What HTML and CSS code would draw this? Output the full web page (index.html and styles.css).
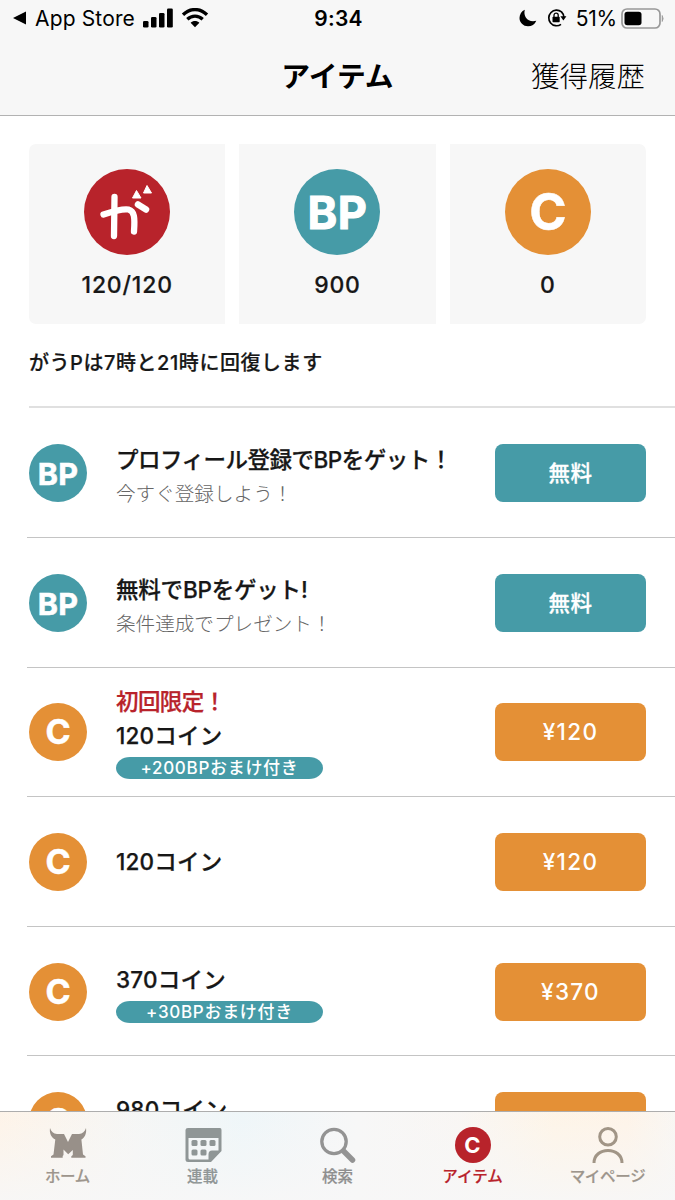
FILE: index.html
```html
<!DOCTYPE html>
<html lang="ja">
<head>
<meta charset="utf-8">
<title>アイテム</title>
<link rel="stylesheet" href="styles.css">
</head>
<body>
<div class="phone">
  <header class="top">
    <div class="status">
      <div class="status-left">
        <svg width="15" height="14" viewBox="0 0 15 14"><path d="M1 7 14 .5v13z"/></svg>
        <span class="back">App Store</span>
        <svg class="signal" width="31" height="20" viewBox="0 0 31 20"><rect x="0" y="13" width="5.5" height="6.5" rx="1.3"/><rect x="8" y="9" width="5.5" height="10.5" rx="1.3"/><rect x="16" y="5" width="5.5" height="14.500" rx="1.3"/><rect x="24" y="0.500" width="5.800" height="19" rx="1.3"/></svg>
        <svg class="wifi" width="28" height="20" viewBox="0 0 28 20"><path d="M2 6.700C9-.2 19-.2 26 6.700M6.300 11.300c4.500-4.200 10.900-4.200 15.400 0" fill="none" stroke="#000" stroke-width="3.300"/><path d="M9.600 14.700c2.400-2.300 6.400-2.300 8.800 0L14 19.300z"/></svg>
      </div>
      <div class="clock">9:34</div>
      <div class="status-right">
        <svg width="18" height="18" viewBox="0 0 18 18"><path d="M5.800.7C3.900 7.500 9.300 14 17.300 11.700 15.800 15.300 12.700 17.300 9 17.300 4.200 17.300.5 13.500.5 9 .5 5.300 2.600 2.100 5.800.7z"/></svg>
        <svg class="lock" width="20" height="18" viewBox="0 0 20 18"><path d="M14.500 2.900A7.800 7.800 0 1 0 14 15.400M14.500 2.900A7.800 7.800 0 0 1 16.800 8" fill="none" stroke="#000" stroke-width="1.700"/><path d="M13.400 7.300h6l-3 4.200z"/><rect x="5.500" y="7.800" width="7.200" height="5.500" rx=".7"/><path d="M7 8V6.300a2.100 2.100 0 0 1 4.200 0V8" fill="none" stroke="#000" stroke-width="1.300"/></svg>
        <span class="percent">51%</span>
        <svg class="battery" width="44" height="21" viewBox="0 0 44 21"><rect x="1" y="1" width="38" height="19" rx="5" fill="none" stroke="#999" stroke-width="1.700"/><rect x="3.500" y="3.800" width="17" height="13.500" rx="2.800"/><path d="M41.200 7.500q1.800 3 0 6z" fill="#999" stroke="#999" stroke-width=".8"/></svg>
      </div>
    </div>
    <nav class="nav"><span></span><h1>アイテム</h1><a class="history">獲得履歴</a></nav>
  </header>
  <main class="content">
    <section class="cards">
      <div class="card first">
        <svg width="86" height="86" viewBox="0 0 86 86"><circle cx="43" cy="43" r="43" fill="#b8232b"/><path d="M19.500 45.500C30 42 39 39.300 44.500 40.500c6 1.500 6.500 8 5.500 22" fill="none" stroke="#fff" stroke-width="6.300" stroke-linecap="round" stroke-linejoin="round"/><path d="M30.500 28 30 67" stroke="#fff" stroke-width="6.300" stroke-linecap="round"/><path d="M54 35.500 62 40.500" stroke="#fff" stroke-width="6.500" stroke-linecap="round"/><path d="M52.500 21.500 57 29h-8.500zM63 16.500 67.500 24h-8z" fill="#fff" stroke="#fff" stroke-linejoin="round"/></svg>
        <span class="amount">120/120</span>
      </div>
      <div class="card"><i class="coin big bp">BP</i><span class="amount">900</span></div>
      <div class="card last"><i class="coin big">C</i><span class="amount">0</span></div>
    </section>
    <p class="note">がうPは7時と21時に回復します</p>
    <ul class="list">
      <li class="row lead"><i class="coin bp">BP</i><div class="info promo"><b class="t1">プロフィール登録でBPをゲット！</b><span class="sub">今すぐ登録しよう！</span></div><button class="btn free">無料</button></li>
      <li class="row"><i class="coin bp">BP</i><div class="info promo"><b class="t2">無料でBPをゲット!</b><span class="sub">条件達成でプレゼント！</span></div><button class="btn free">無料</button></li>
      <li class="row"><i class="coin">C</i><div class="info"><b class="limited">初回限定！</b><b>120コイン</b><span class="bonus">+200BPおまけ付き</span></div><button class="btn">¥120</button></li>
      <li class="row"><i class="coin">C</i><div class="info"><b>120コイン</b></div><button class="btn">¥120</button></li>
      <li class="row"><i class="coin">C</i><div class="info extra"><b>370コイン</b><span class="bonus">+30BPおまけ付き</span></div><button class="btn">¥370</button></li>
      <li class="row"><i class="coin">C</i><div class="info extra"><b>980コイン</b><span class="bonus"></span></div><button class="btn"></button></li>
    </ul>
  </main>
  <footer class="tabs">
    <a class="tab warm"><svg width="38" height="36" viewBox="0 0 38 36"><path fill="#989089" d="M1 1C2.200 4.500 4.500 6.800 8 7h7l4 8 4-8h7c3.500-.2 5.800-2.500 7-6 .8 5.500-1.300 9.800-4.600 11.600L34 27.500l2.500 1.700v1.500H22.300v-1.500l1.500-1.200v-5L19.200 27.300 14.500 22.500V28l-.8 1v1.700H2v-1.500l2.500-1.700L6.300 12.600C2.500 10.800.2 6.500 1 1z"/></svg><span>ホーム</span></a>
    <a class="tab cool"><svg width="38" height="36" viewBox="0 0 38 36"><path fill="#8f9696" fill-rule="evenodd" d="M4 1h32q1.500 0 1.500 2v21L27 35H4q-2.500 0-2.500-2V3q0-2 2.500-2zM4.500 11v20q0 1.500 1.500 1.500h18.500v-5q0-4 3.500-4h6.500V11z"/><g fill="#8f9696"><rect x="7.500" y="13" width="6" height="6" rx="1.500"/><rect x="16.500" y="13" width="6" height="6" rx="1.500"/><rect x="25.500" y="13" width="6" height="6" rx="1.500"/><rect x="7.500" y="22.500" width="6" height="6" rx="1.500"/><rect x="16.500" y="22.500" width="6" height="6" rx="1.500"/></g></svg><span>連載</span></a>
    <a class="tab"><svg width="38" height="36" viewBox="0 0 38 36" fill="none" stroke="#939393"><circle cx="15" cy="14.500" r="12.200" stroke-width="3.300"/><path d="m24.500 24 9 9" stroke-width="5.500" stroke-linecap="round"/></svg><span>検索</span></a>
    <a class="tab active"><i class="coin red">C</i><span>アイテム</span></a>
    <a class="tab warm"><svg width="38" height="36" viewBox="0 0 38 36" fill="none" stroke="#a19586" stroke-width="3"><circle cx="19" cy="9.800" r="8.300"/><path d="M5 36c0-8 6.500-12.500 14-12.500S33 28 33 36"/></svg><span>マイページ</span></a>
  </footer>
</div>
</body>
</html>
```
FILE: styles.css
```css
* { box-sizing: border-box; }
body { margin: 0; background: #fff; color: #171717; font-family: Inter, "Noto Sans CJK JP", sans-serif; }
.phone { width: 675px; height: 1200px; display: flex; flex-direction: column; overflow: hidden; }
svg { display: block; flex: none; }

.top { height: 116px; flex: none; background: #f7f7f7; border-bottom: 1px solid #b2b2b2; color: #000; }
.status { height: 36px; display: grid; grid-template-columns: 1fr auto 1fr; align-items: center; padding: 0 10px 0 12px; }
.status-left, .status-right { display: flex; align-items: center; }
.status-right { justify-content: flex-end; }
.back { font-size: 21px; margin-left: 8px; letter-spacing: .15px; }
.signal { margin-left: 8px; }
.wifi { margin-left: 7px; }
.clock { font-size: 21px; font-weight: 600; letter-spacing: .3px; }
.lock { margin-left: 10px; }
.percent { font-size: 21px; margin-left: 9px; letter-spacing: -.2px; }
.battery { margin-left: 4px; }
.nav { height: 81px; display: grid; grid-template-columns: 1fr auto 1fr; align-items: center; padding: 0 30px; }
h1 { margin: 0; font-size: 28.800px; font-weight: 700; line-height: 40px; }
.history { justify-self: end; font-size: 28.500px; font-weight: 300; line-height: 40px; }

.content { flex: 1; min-height: 0; overflow: hidden; padding-top: 28px; }
.cards { display: grid; grid-template-columns: repeat(3, 1fr); gap: 14px; padding: 0 29px; }
.card { height: 180px; background: #f7f7f7; display: flex; flex-direction: column; align-items: center; padding-top: 25px; }
.card.first { border-radius: 7px 0 0 7px; }
.card.last { border-radius: 0 7px 7px 0; }
.amount { margin-top: 15px; line-height: 30px; font-size: 23px; font-weight: 500; letter-spacing: .8px; -webkit-text-stroke: .2px; }

.coin { flex: none; width: 58px; height: 58px; border-radius: 50%; background: #e49036; color: #fff; font: 700 34px/58px Inter, sans-serif; text-align: center; -webkit-text-stroke: .5px; }
.coin.bp { background: #469ba7; font-size: 30.500px; line-height: 59px; letter-spacing: .2px; -webkit-text-stroke: .6px; }
.coin.big { width: 86px; height: 86px; font-size: 50.500px; line-height: 86px; }
.coin.big.bp { font-size: 45px; line-height: 88px; letter-spacing: .4px; -webkit-text-stroke: 1px; }
.coin.red { width: 36px; height: 36px; background: #b8232b; font-size: 22px; line-height: 36px; margin-bottom: 1px; -webkit-text-stroke: 0; }

.note { margin: 24px 0 0 29px; font-size: 20px; line-height: 30px; font-weight: 500; letter-spacing: .55px; -webkit-text-stroke: .2px; }

.list { list-style: none; margin: 28.400px 0 0; padding: 0 0 0 27px; }
.row { height: 129.600px; border-top: 1px solid #c4c4c4; display: flex; align-items: center; padding: 1px 29px 0 2px; }
.row.lead { height: 130.600px; margin-left: 2px; padding-left: 0; border-top: 2px solid #e0e0e0; }
.info { flex: 1; margin-left: 29px; display: flex; flex-direction: column; align-items: flex-start; }
.info b { font-size: 22.500px; font-weight: 500; line-height: 34px; letter-spacing: .2px; white-space: nowrap; -webkit-text-stroke: .25px; }
.info .t1 { letter-spacing: -.5px; }
.info .t2 { letter-spacing: -.2px; }
.info .limited { color: #b8232b; letter-spacing: -.6px; }
.promo { padding-top: 8px; }
.extra { padding-top: 3px; }
.sub { font-size: 19.600px; font-weight: 300; line-height: 34px; color: #666; }
.bonus { width: 207px; height: 22px; border-radius: 14px / 11px; background: #469ba7; color: #fff; font-size: 17px; font-weight: 500; line-height: 22px; text-align: center; letter-spacing: .7px; margin-top: 4px; }
.btn { width: 151px; height: 58px; padding: 0; border: 0; border-radius: 8px; background: #e49036; color: #fff; font: 500 22.500px/58px Inter, "Noto Sans CJK JP", sans-serif; letter-spacing: 1.300px; }
.btn.free { background: #469ba7; font-size: 21.500px; letter-spacing: .6px; -webkit-text-stroke: .3px; }

.tabs { height: 89px; flex: none; border-top: 1px solid #adadad; display: grid; grid-template-columns: repeat(5, 1fr); background: linear-gradient(rgba(247,247,247,.2) 10%, rgba(247,247,247,.9)), linear-gradient(90deg, #fff3e6 0, #f5f6f5 20%, #edf6f9 36%, #f7f7f7 53%, #f9f6f3 68%, #fff4e5 82%, #fff3e6 93%, #f9f6f2); }
.tab { display: flex; flex-direction: column; align-items: center; padding-top: 15px; font-size: 15.500px; font-weight: 500; line-height: 24px; color: #8f8f8f; -webkit-text-stroke: .2px; }
.tab span { padding-top: 1px; }
.tab svg { margin-bottom: 1px; }
.warm { color: #9d958c; letter-spacing: -.3px; }
.cool { color: #909696; }
.active { color: #b8232b; }
```
